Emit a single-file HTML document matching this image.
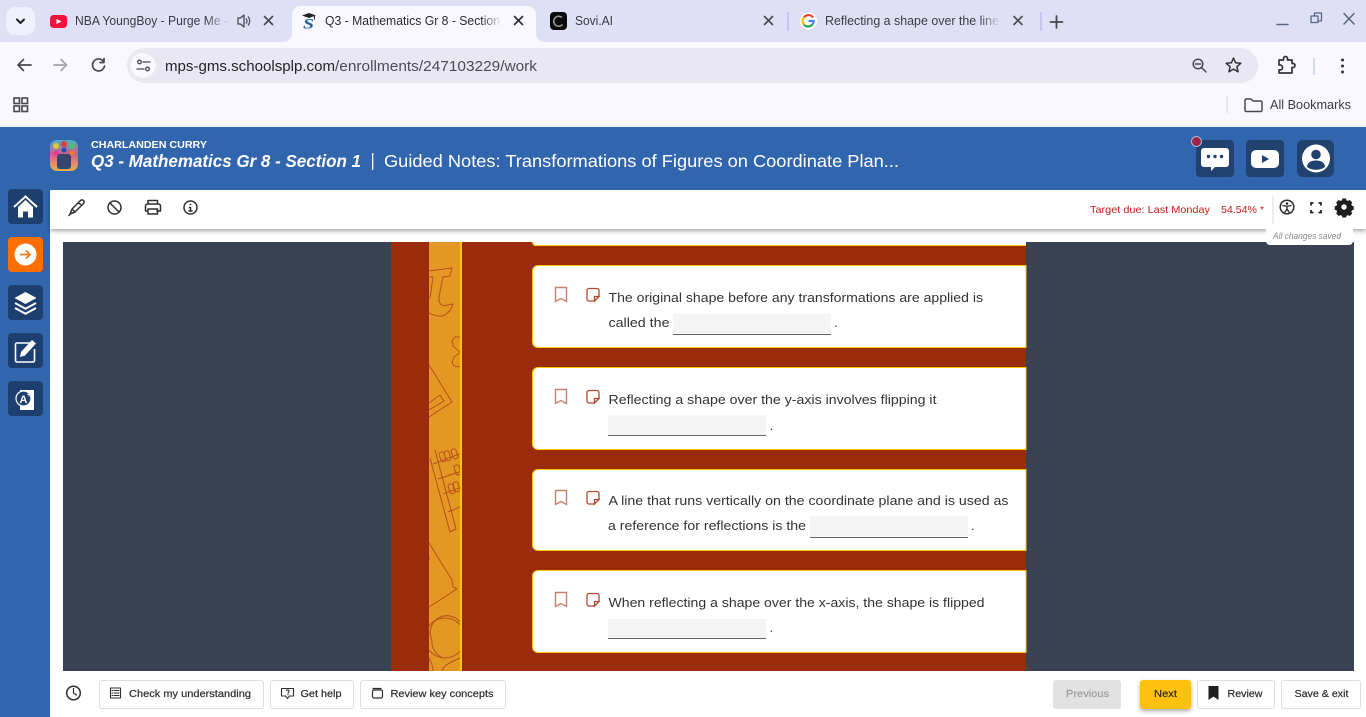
<!DOCTYPE html>
<html lang="en"><head><meta charset="utf-8"><title>Q3 - Mathematics Gr 8</title>
<style>
html,body{margin:0;padding:0;width:1366px;height:717px;overflow:hidden;background:#fff}
svg{display:block}
text{font-family:"Liberation Sans",sans-serif;white-space:pre}
.t{font-size:12.5px;fill:#3a3b45}
.b{font-size:10.5px;fill:#2b2b2b;stroke:#2b2b2b;stroke-width:.2px}
.q{font-size:13px;fill:#333}
.i{fill:none;stroke:#2f2f2f;stroke-width:1.5;stroke-linecap:round;stroke-linejoin:round}
.c{fill:none;stroke:#47474f;stroke-width:1.6;stroke-linecap:round;stroke-linejoin:round}
.d{fill:none;stroke:#b9501c;stroke-width:1;stroke-linejoin:round}
</style></head><body>
<svg width="1366" height="717" viewBox="0 0 1366 717" xmlns="http://www.w3.org/2000/svg">
<defs>
<clipPath id="strip"><rect x="429" y="242" width="31" height="429"/></clipPath>
<linearGradient id="f1" x1="0" x2="1"><stop offset="0" stop-color="#dfe0f6" stop-opacity="0"/><stop offset="1" stop-color="#dfe0f6"/></linearGradient>
<linearGradient id="f2" x1="0" x2="1"><stop offset="0" stop-color="#faf8ff" stop-opacity="0"/><stop offset="1" stop-color="#faf8ff"/></linearGradient>
<linearGradient id="av" x1="0" y1="0" x2="0" y2="1"><stop offset="0" stop-color="#45b3c9"/><stop offset=".45" stop-color="#d9588f"/><stop offset="1" stop-color="#e8b24a"/></linearGradient>
<filter id="sh" x="-5%" y="-20%" width="110%" height="150%"><feDropShadow dx="0" dy="2" stdDeviation="2" flood-color="#000" flood-opacity=".35"/></filter>
</defs>

<!-- Browser chrome -->
<rect width="1366" height="42" fill="#dfe0f6"/>
<rect y="42" width="1366" height="84" fill="#faf8ff"/>
<rect y="125" width="1366" height="2" fill="#f2f2f5"/>
<rect x="6" y="7" width="29" height="28" rx="9" fill="#eff0fb"/>
<path class="c" style="stroke:#1f1f28;stroke-width:2" d="M17 19.500l3.500 3.500 3.500-3.500"/>

<!-- tab 1 -->
<rect x="50" y="15" width="17" height="13" rx="3.500" fill="#f3123c"/><path d="M56.500 19l5 2.500-5 2.500z" fill="#fff"/>
<text class="t" x="75" y="25" textLength="153" lengthAdjust="spacingAndGlyphs">NBA YoungBoy - Purge Me -</text>
<rect x="205" y="12" width="25" height="20" fill="url(#f1)"/>
<path d="M238 18h2.500l3.500-3v12l-3.500-3H238z" fill="none" stroke="#47474f" stroke-width="1.300" stroke-linejoin="round"/><path d="M246 18.500c1.200 1.500 1.200 3.500 0 5M248 16.500c2.200 2.800 2.200 6.200 0 9" fill="none" stroke="#47474f" stroke-width="1.200"/>
<path class="c" d="M264.500 16.500l8 8M272.500 16.500l-8 8"/>

<!-- tab 2 (active) -->
<path d="M282 42c6 0 10-3 10-9V15c0-6 4-9 9-9h226c5 0 9 3 9 9v18c0 6 4 9 10 9z" fill="#faf8ff"/>
<path d="M302 15.500l7-2.500 7 2.500-7 2.500z" fill="#222"/><path d="M314.500 15.500v4" stroke="#222" stroke-width="1"/>
<text x="303" y="28.500" font-size="14.500" font-weight="bold" font-style="italic" style="font-family:'Liberation Serif',serif;fill:#1d5ea8" textLength="11" lengthAdjust="spacingAndGlyphs">S</text>
<text class="t" x="325" y="25" textLength="175" lengthAdjust="spacingAndGlyphs" style="fill:#2a2a32">Q3 - Mathematics Gr 8 - Section</text>
<rect x="482" y="12" width="20" height="20" fill="url(#f2)"/>
<path class="c" style="stroke:#2a2a32" d="M514.500 16.500l8 8M522.500 16.500l-8 8"/>

<!-- tab 3 -->
<rect x="550" y="12" width="17" height="18" rx="4" fill="#0b0b0b"/><path d="M562 17.500a5 5 0 1 0 .5 7" fill="none" stroke="#9b9b9b" stroke-width="1.500"/>
<text class="t" x="575" y="25" textLength="38" lengthAdjust="spacingAndGlyphs">Sovi.AI</text>
<path class="c" d="M764.500 16.500l8 8M772.500 16.500l-8 8"/>
<rect x="787" y="12" width="2" height="19" fill="#c4c8f0"/>

<!-- tab 4 -->
<circle cx="808.500" cy="21" r="8.500" fill="#fff"/>
<g fill="none" stroke-width="2.200"><path d="M813 17.500a5.500 5.500 0 0 0-9-.2" stroke="#ea4335"/><path d="M804 17.300a5.500 5.500 0 0 0 0 7.400" stroke="#fbbc05"/><path d="M804 24.700a5.500 5.500 0 0 0 8.500-.5" stroke="#34a853"/><path d="M812.500 24.200c.9-1 1.300-2.100 1.300-3.200h-5.300" stroke="#4285f4"/></g>
<text class="t" x="825" y="25" textLength="174" lengthAdjust="spacingAndGlyphs">Reflecting a shape over the line</text>
<rect x="980" y="12" width="20" height="20" fill="url(#f1)"/>
<path class="c" d="M1014 16.500l8 8M1022 16.500l-8 8"/>
<rect x="1040" y="12" width="2" height="19" fill="#c4c8f0"/>
<path class="c" style="stroke-width:1.800" d="M1056.500 16v12M1050.500 22h12"/>

<!-- window controls -->
<path class="c" style="stroke:#5a6482;stroke-width:1.500" d="M1277 24.500h11"/>
<path class="c" style="stroke:#5a6482;stroke-width:1.300" d="M1314.500 15v-2h7v8h-2.500M1311 16v6.500h7V16z"/>
<path class="c" style="stroke:#5a6482;stroke-width:1.500" d="M1344 13.500l10 10.500M1354 13.500l-10 10.500"/>

<!-- toolbar -->
<path class="c" style="stroke-width:1.700" d="M31 65H18M23.500 59.500L18 65l5.500 5.500"/>
<path class="c" style="stroke:#a4a4ac;stroke-width:1.700" d="M54 65h12M61 59.500L66.500 65 61 70.500"/>
<path class="c" style="stroke-width:1.700" d="M103.500 61.500A6 6 0 1 0 104.500 66M104 58.500v4h-4"/>
<rect x="127" y="48" width="1131" height="35" rx="17.500" fill="#e9e7f2"/>
<circle cx="143" cy="65.500" r="12.500" fill="#faf8ff"/>
<path class="c" style="stroke-width:1.300" d="M143 62h7M137 69h7"/><circle cx="139.500" cy="62" r="1.800" fill="none" stroke="#47474f" stroke-width="1.300"/><circle cx="147.500" cy="69" r="1.800" fill="none" stroke="#47474f" stroke-width="1.300"/>
<text x="165" y="71" font-size="15" fill="#24242c" textLength="170" lengthAdjust="spacingAndGlyphs">mps-gms.schoolsplp.com</text>
<text x="335" y="71" font-size="15" fill="#4c4c56" textLength="202" lengthAdjust="spacingAndGlyphs">/enrollments/247103229/work</text>
<circle cx="1198" cy="64" r="4.800" fill="none" stroke="#47474f" stroke-width="1.500"/><path class="c" style="stroke-width:1.500" d="M1195.500 64h5M1201.500 67.500l4.500 4.500"/>
<path class="c" style="stroke:#33333b;stroke-width:1.500" d="M1233.500 58l2.100 4.800 5.200.5-3.900 3.400 1.200 5.100-4.600-2.700-4.600 2.700 1.200-5.100-3.900-3.400 5.200-.5z"/>
<path class="c" style="stroke:#33333b;stroke-width:1.700" d="M1279 60h4.500v-1.500a2 2 0 0 1 4 0V60h4.500v3.500h1a2 2 0 0 1 0 4h-1V73h-13v-3h1a2.500 2.500 0 0 0 0-5h-1z"/>
<rect x="1313" y="58" width="2" height="17" fill="#d5d8f2"/>
<g fill="#33333b"><circle cx="1342.500" cy="60" r="1.500"/><circle cx="1342.500" cy="66" r="1.500"/><circle cx="1342.500" cy="72" r="1.500"/></g>

<!-- bookmarks -->
<g fill="none" stroke="#47474f" stroke-width="1.600"><rect x="14" y="98" width="5.500" height="5.500"/><rect x="22" y="98" width="5.500" height="5.500"/><rect x="14" y="106" width="5.500" height="5.500"/><rect x="22" y="106" width="5.500" height="5.500"/></g>
<rect x="1226" y="96" width="2" height="17" fill="#e3e4f6"/>
<path class="c" style="stroke-width:1.500" d="M1245 100.500a1.500 1.500 0 0 1 1.500-1.500h4.500l2 2h7.500a1.500 1.500 0 0 1 1.500 1.500v7.500a1.500 1.500 0 0 1-1.500 1.500h-14a1.500 1.500 0 0 1-1.500-1.500z"/>
<text x="1270" y="109" font-size="12.500" fill="#3a3b45" textLength="81" lengthAdjust="spacingAndGlyphs">All Bookmarks</text>

<!-- App header -->
<rect y="127" width="1366" height="63" fill="#3165ae"/>
<rect y="190" width="50" height="527" fill="#3165ae"/>
<rect x="50" y="140" width="28" height="31" rx="7" fill="url(#av)"/>
<rect x="57" y="154" width="14" height="15" rx="3" fill="#34466b"/>
<circle cx="56" cy="146" r="3" fill="#d8c92e"/><circle cx="64" cy="144" r="3" fill="#e23b3b"/><circle cx="72" cy="146" r="3" fill="#49c26b"/><circle cx="56" cy="153" r="2.500" fill="#d93b9b"/><circle cx="72" cy="153" r="2.500" fill="#e97b2e"/><circle cx="64" cy="150" r="2.500" fill="#2a4d9c"/>
<text x="91" y="148" font-size="10.500" font-weight="bold" fill="#fff" textLength="116" lengthAdjust="spacingAndGlyphs">CHARLANDEN CURRY</text>
<text x="91" y="167" font-size="17.500" font-weight="bold" font-style="italic" fill="#fff" textLength="270" lengthAdjust="spacingAndGlyphs">Q3 - Mathematics Gr 8 - Section 1</text>
<rect x="372" y="153" width="1.300" height="17" fill="#fff"/>
<text x="384" y="167" font-size="17.500" fill="#fff" textLength="515" lengthAdjust="spacingAndGlyphs">Guided Notes: Transformations of Figures on Coordinate Plan...</text>

<!-- header right -->
<rect x="1196" y="140" width="38" height="37" rx="4" fill="#21416f"/>
<path d="M1204 148h22a3 3 0 0 1 3 3v13a3 3 0 0 1-3 3h-11l-4 4v-4h-7a3 3 0 0 1-3-3v-13a3 3 0 0 1 3-3z" fill="#fff"/>
<g fill="#21416f"><circle cx="1208.500" cy="156.500" r="1.700"/><circle cx="1215" cy="156.500" r="1.700"/><circle cx="1221.500" cy="156.500" r="1.700"/></g>
<circle cx="1196.500" cy="141.500" r="5" fill="#a3244a" stroke="#a9b6d4" stroke-width="1"/>
<rect x="1246" y="140" width="38" height="37" rx="4" fill="#21416f"/>
<rect x="1251" y="150" width="28" height="18" rx="5" fill="#fff"/><path d="M1262 155l7 4-7 4z" fill="#21416f"/>
<rect x="1297" y="140" width="37" height="37" rx="6" fill="#21416f"/>
<circle cx="1316" cy="158.500" r="14" fill="#fff"/>
<circle cx="1316" cy="154.500" r="4.800" fill="#21416f"/><path d="M1307 167c0-4.500 4-6.500 9-6.500s9 2 9 6.500c-2.400 1.800-5.500 2.800-9 2.800s-6.600-1-9-2.800z" fill="#21416f"/>

<!-- sidebar -->
<rect x="8" y="189" width="35" height="35" rx="4" fill="#1c3f70"/>
<path d="M14 207l11.500-10.500L37 207" fill="none" stroke="#fff" stroke-width="2"/><path d="M18 207l7.500-7 7.500 7v10.500h-5v-6h-5v6h-5z" fill="#fff"/>
<rect x="8" y="237" width="35" height="35" rx="4" fill="#ff6f00"/>
<circle cx="25.500" cy="254.500" r="11" fill="#fff"/><path d="M20 254.500h10M26 250.500l4 4-4 4" fill="none" stroke="#f47a20" stroke-width="1.800"/>
<rect x="8" y="285" width="35" height="35" rx="4" fill="#1c3f70"/>
<path d="M25.500 292l11 6-11 6-11-6z" fill="#fff"/><path d="M15 303l10.500 5.700L36 303M15 308l10.500 5.700L36 308" fill="none" stroke="#fff" stroke-width="2"/>
<rect x="8" y="333" width="35" height="35" rx="4" fill="#1c3f70"/>
<path d="M31 343H17a1.500 1.500 0 0 0-1.500 1.500v16a1.500 1.500 0 0 0 1.500 1.500h16a1.500 1.500 0 0 0 1.500-1.500V349" fill="none" stroke="#fff" stroke-width="1.600"/>
<path d="M21 352l11-12 4 3.500-11 12-5 1.500z" fill="#fff"/>
<rect x="8" y="381" width="35" height="35" rx="4" fill="#1c3f70"/>
<path d="M20 390h14v20H20z" fill="#fff"/><circle cx="23.500" cy="398.500" r="7.500" fill="#1c3f70" stroke="#fff" stroke-width="1.200"/>
<text x="19.500" y="403" font-size="11" font-weight="bold" fill="#fff">A</text><text x="27" y="397" font-size="7" font-weight="bold" fill="#fff">+</text>

<!-- content bg -->
<path d="M50 194a4 4 0 0 1 4-4h1312v527H50z" fill="#fff"/>
<rect x="63" y="242" width="1291" height="429" fill="#394252"/>
<rect x="391" y="242" width="635" height="429" fill="#9a2c0b"/>
<rect x="429" y="242" width="31" height="429" fill="#e29823"/>
<rect x="460" y="242" width="2" height="429" fill="#ffc800"/>
<g clip-path="url(#strip)">
<path class="d" d="M429 271L452 268L450 276L443 277L439 297C438 305 444 307 447 305L453 304C451 312 444 317 438 316C433 315 430 314 428 312"/>
<path class="d" d="M429 277H433L430 298"/>
<path class="d" d="M461 337L455 337 452 341 453 346 461 353M461 352L454 357 452 362 454 366 461 367"/>
<path class="d" d="M429 365L452 402 429 417M429 410L444 401 440 395 429 403"/>
<path class="d" d="M430 458L450 532 456 529 435 450"/>
<path class="d" d="M433 464L462 453M438 479L462 471M443 494L462 487M448 512L462 506"/>
<rect class="d" x="440" y="452" width="5" height="10" rx="2" transform="rotate(-18 442 457)"/>
<rect class="d" x="445" y="451" width="5" height="10" rx="2" transform="rotate(-18 447 456)"/>
<rect class="d" x="452" y="449" width="5" height="10" rx="2" transform="rotate(-18 454 454)"/>
<rect class="d" x="455" y="465" width="5" height="10" rx="2" transform="rotate(-18 457 470)"/>
<rect class="d" x="449" y="484" width="5" height="10" rx="2" transform="rotate(-18 451 489)"/>
<rect class="d" x="454" y="482" width="5" height="10" rx="2" transform="rotate(-18 456 487)"/>
<path class="d" d="M429 543L452 580 453 587 457 589 429 607M429 556V560"/>
<circle class="d" cx="445" cy="638" r="20"/><path class="d" d="M462 625A15 15 0 0 0 432 640C431 648 436 655 443 658"/>
<path class="d" d="M429 658C431 662 433 666 433 671M442 671C444 664 452 662 462 657"/>
</g>

<!-- toolbar bar -->
<path d="M50 194a4 4 0 0 1 4-4h1312v39H50z" fill="#fff" filter="url(#sh)"/>
<!-- small tab -->
<path d="M1266 229h87v12a4 4 0 0 1-4 4h-79a4 4 0 0 1-4-4z" fill="#fff"/>
<text x="1273" y="239" font-size="9" font-style="italic" fill="#8a8a8a" textLength="68" lengthAdjust="spacingAndGlyphs">All changes saved</text>

<!-- toolbar icons -->
<path class="i" d="M70 214l2-5 8.500-8.500a2.100 2.100 0 0 1 3 3L75 212zM72 209l3 3M78.500 202.500l3 3M70 214l-1 1.500"/>
<circle class="i" cx="114.500" cy="207.500" r="6.500"/><path class="i" d="M110 203l9 9"/>
<path class="i" d="M148 204v-3.500h9.500v3.500M148 211h-2.500v-5a2 2 0 0 1 2-2h11a2 2 0 0 1 2 2v5H157M148 209h9.500v5h-9.500z"/>
<circle class="i" cx="190.500" cy="207.500" r="6.500"/><circle cx="190.500" cy="204.500" r=".9" fill="#2f2f2f"/><path class="i" d="M189.500 207.500h1v3.500M189 211h3"/>
<text x="1090" y="213" font-size="10.500" fill="#c01b1b" textLength="120" lengthAdjust="spacingAndGlyphs">Target due: Last Monday</text>
<text x="1221" y="213" font-size="10.500" fill="#c01b1b" textLength="43" lengthAdjust="spacingAndGlyphs">54.54% *</text>
<rect x="1272.500" y="196" width="1" height="28" fill="#dcdcdc"/>
<circle class="i" cx="1287" cy="207" r="6.800"/><circle cx="1287" cy="203.500" r="1.300" fill="#2f2f2f"/><path class="i" style="stroke-width:1.400" d="M1283 205.500l4 .8 4-.8M1287 206.500v2.500l-2 3M1287 209l2 3"/>
<path class="i" style="stroke:#222;stroke-width:1.800;stroke-linecap:butt;stroke-linejoin:miter" d="M1311 205.500v-2.500h2.500M1318.500 203h2.500v2.500M1321 210v2.500h-2.500M1313.500 212.500H1311V210"/>
<path d="M1342 200h4l.6 2.100 1.500.6 2-1 2.800 2.800-1 2 .6 1.500 2 .6v4l-2 .6-.6 1.500 1 2-2.800 2.800-2-1-1.500.6-.6 2h-4l-.6-2-1.500-.6-2 1-2.800-2.800 1-2-.6-1.500-2-.6v-4l2-.6.6-1.500-1-2 2.800-2.800 2 1 1.500-.6z" transform="translate(134.600 18.500) scale(.9)" fill="#1d1d1d"/>
<circle cx="1344" cy="207" r="2.700" fill="#fff"/>

<!-- top partial card -->
<path d="M532 242v0a4 4 0 0 0 4 4h490v-4z" fill="#fff"/>
<path d="M532.500 242a3.500 3.500 0 0 0 3.500 3.500h490" fill="none" stroke="#ffc800"/>

<!-- card 1 -->
<path d="M1026 265.500H538a5.500 5.500 0 0 0-5.500 5.500v71a5.500 5.500 0 0 0 5.500 5.500h488z" fill="#fff" stroke="#ffc800"/>
<path d="M555.500 287.500h11v14l-5.500-3-5.500 3z" fill="none" stroke="#c8806f" stroke-width="1.400"/>
<path d="M589 288.500h8a2 2 0 0 1 2 2v6l-4.500 4.500H589a2 2 0 0 1-2-2v-8.500a2 2 0 0 1 2-2zM599 296.500l-4.500 4.500v-4.500z" fill="none" stroke="#b5462c" stroke-width="1.300"/>
<text class="q" x="608.500" y="302" textLength="374.500" lengthAdjust="spacingAndGlyphs">The original shape before any transformations are applied is</text>
<text class="q" x="608.500" y="327" textLength="61" lengthAdjust="spacingAndGlyphs">called the</text>
<rect x="673" y="314" width="158" height="20" fill="#f5f5f5"/><rect x="673" y="334" width="158" height="1" fill="#666"/>
<text class="q" x="834" y="327">.</text>

<!-- card 2 -->
<path d="M1026 367.500H538a5.500 5.500 0 0 0-5.500 5.500v71a5.500 5.500 0 0 0 5.500 5.500h488z" fill="#fff" stroke="#ffc800"/>
<path d="M555.500 389.500h11v14l-5.500-3-5.500 3z" fill="none" stroke="#c8806f" stroke-width="1.400"/>
<path d="M589 390.500h8a2 2 0 0 1 2 2v6l-4.500 4.500H589a2 2 0 0 1-2-2v-8.500a2 2 0 0 1 2-2zM599 398.500l-4.500 4.500v-4.500z" fill="none" stroke="#b5462c" stroke-width="1.300"/>
<text class="q" x="608.500" y="404" textLength="328" lengthAdjust="spacingAndGlyphs">Reflecting a shape over the y-axis involves flipping it</text>
<rect x="608" y="415" width="158" height="20" fill="#f5f5f5"/><rect x="608" y="435" width="158" height="1" fill="#666"/>
<text class="q" x="769.500" y="430">.</text>

<!-- card 3 -->
<path d="M1026 469.500H538a5.500 5.500 0 0 0-5.500 5.500v70a5.500 5.500 0 0 0 5.500 5.500h488z" fill="#fff" stroke="#ffc800"/>
<path d="M555.500 490.500h11v14l-5.500-3-5.500 3z" fill="none" stroke="#c8806f" stroke-width="1.400"/>
<path d="M589 491.500h8a2 2 0 0 1 2 2v6l-4.500 4.500H589a2 2 0 0 1-2-2v-8.500a2 2 0 0 1 2-2zM599 499.500l-4.500 4.500v-4.500z" fill="none" stroke="#b5462c" stroke-width="1.300"/>
<text class="q" x="608.500" y="505" textLength="400" lengthAdjust="spacingAndGlyphs">A line that runs vertically on the coordinate plane and is used as</text>
<text class="q" x="608" y="530" textLength="198" lengthAdjust="spacingAndGlyphs">a reference for reflections is the</text>
<rect x="810" y="516" width="158" height="21" fill="#f5f5f5"/><rect x="810" y="537" width="158" height="1" fill="#666"/>
<text class="q" x="971" y="530">.</text>

<!-- card 4 -->
<path d="M1026 570.500H538a5.500 5.500 0 0 0-5.500 5.500v71a5.500 5.500 0 0 0 5.500 5.500h488z" fill="#fff" stroke="#ffc800"/>
<path d="M555.500 592.500h11v14l-5.500-3-5.500 3z" fill="none" stroke="#c8806f" stroke-width="1.400"/>
<path d="M589 593.500h8a2 2 0 0 1 2 2v6l-4.500 4.500H589a2 2 0 0 1-2-2v-8.500a2 2 0 0 1 2-2zM599 601.500l-4.500 4.500v-4.500z" fill="none" stroke="#b5462c" stroke-width="1.300"/>
<text class="q" x="608.500" y="607" textLength="376" lengthAdjust="spacingAndGlyphs">When reflecting a shape over the x-axis, the shape is flipped</text>
<rect x="608" y="619" width="158" height="19" fill="#f5f5f5"/><rect x="608" y="638" width="158" height="1" fill="#666"/>
<text class="q" x="769.500" y="632">.</text>

<!-- bottom bar -->
<rect x="50" y="671" width="1316" height="46" fill="#fff"/>
<circle class="i" cx="73.500" cy="693" r="6.800"/><path class="i" style="stroke-width:1.200" d="M73.500 688.500V693l3 2"/>
<g fill="#fff" stroke="#dedede">
<rect x="99.500" y="680.500" width="164" height="28" rx="2.500"/>
<rect x="270.500" y="680.500" width="83" height="28" rx="2.500"/>
<rect x="360.500" y="680.500" width="145" height="28" rx="2.500"/>
<rect x="1197.500" y="680.500" width="77" height="28" rx="2.500"/>
<rect x="1281.500" y="680.500" width="79" height="28" rx="2.500"/>
</g>
<path class="i" style="stroke-width:1.100" d="M110.500 688h10v10h-10zM114 690.500h5M114 693h5M114 695.500h5M112 690.500h.8M112 693h.8M112 695.500h.8"/>
<text class="b" x="129" y="697" textLength="122" lengthAdjust="spacingAndGlyphs">Check my understanding</text>
<path class="i" style="stroke-width:1.100" d="M281.500 688.500h12v7.500h-4l-2 2.500-2-2.500h-4zM286.500 690.500c1-1 3-.500 2.500 1-.3.800-1 .800-1 1.800M288 694.500v.2"/>
<text class="b" x="300.500" y="697" textLength="41" lengthAdjust="spacingAndGlyphs">Get help</text>
<path class="i" style="stroke-width:1.200" d="M373 688.500h8M372.500 691.500a1.500 1.500 0 0 1 1.500-1.500h7a1.500 1.500 0 0 1 1.500 1.500v5a1.500 1.500 0 0 1-1.500 1.500h-7a1.500 1.500 0 0 1-1.500-1.500z"/>
<text class="b" x="390.500" y="697" textLength="103" lengthAdjust="spacingAndGlyphs">Review key concepts</text>
<rect x="1053" y="680" width="68" height="29" rx="3" fill="#e2e2e2"/>
<text x="1066" y="697" font-size="10.500" fill="#9c9c9c" textLength="43" lengthAdjust="spacingAndGlyphs" style="stroke:#9c9c9c;stroke-width:.2px">Previous</text>
<rect x="1140" y="680" width="51" height="29" rx="3" fill="#ffc107" filter="url(#sh)"/>
<text class="b" x="1154" y="697" textLength="23" lengthAdjust="spacingAndGlyphs">Next</text>
<path d="M1208.500 686h10v14l-5-3.500-5 3.500z" fill="#1f1f1f"/>
<text class="b" x="1227.500" y="697" textLength="35" lengthAdjust="spacingAndGlyphs">Review</text>
<text class="b" x="1294.500" y="697" textLength="54" lengthAdjust="spacingAndGlyphs">Save &amp; exit</text>
</svg>
</body></html>
